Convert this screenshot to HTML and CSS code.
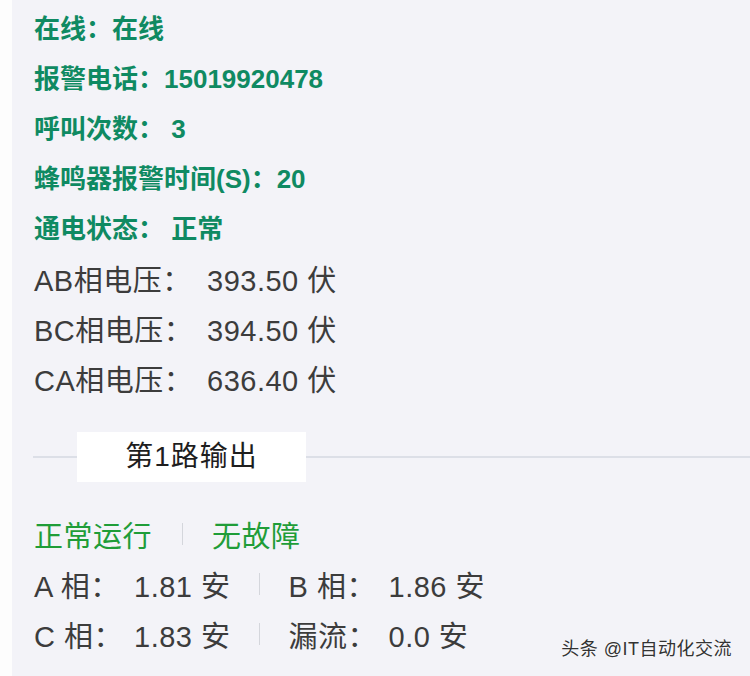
FILE: index.html
```html
<!DOCTYPE html>
<html lang="zh-CN">
<head>
  <meta charset="UTF-8" />
  <meta name="viewport" content="width=device-width, initial-scale=1.0" />
  <title>设备状态</title>
  <link rel="stylesheet" href="styles.css">
</head>
<body>
  <div class="page">
    <div class="info">
      <div class="row strong">在线：在线</div>
      <div class="row strong">报警电话：15019920478</div>
      <div class="row strong">呼叫次数： 3</div>
      <div class="row strong">蜂鸣器报警时间(S)：20</div>
      <div class="row strong">通电状态： 正常</div>
      <div class="row plain first"><span class="label">AB相电压：</span><span>393.50 伏</span></div>
      <div class="row plain"><span class="label">BC相电压：</span><span>394.50 伏</span></div>
      <div class="row plain"><span class="label">CA相电压：</span><span>636.40 伏</span></div>
    </div>

    <div class="divider">
      <span class="line short"></span>
      <span class="title">第1路输出</span>
      <span class="line"></span>
    </div>

    <div class="output">
      <div class="row plain status">
        <span>正常运行</span>
        <span class="sep"></span>
        <span>无故障</span>
      </div>
      <div class="row plain">
        <span class="cell"><span class="label small">A 相：</span><span>1.81 安</span></span>
        <span class="sep"></span>
        <span class="cell"><span class="label small">B 相：</span><span>1.86 安</span></span>
      </div>
      <div class="row plain">
        <span class="cell"><span class="label small">C 相：</span><span>1.83 安</span></span>
        <span class="sep"></span>
        <span class="cell"><span class="label small">漏流：</span><span>0.0 安</span></span>
      </div>
    </div>

    <div class="watermark">头条 @IT自动化交流</div>
  </div>
</body>
</html>
```

FILE: styles.css
```css
body {
  margin: 0;
  padding: 0;
  background-color: #fdfdfd;
  font-family: "Liberation Sans", "Noto Sans CJK SC", sans-serif;
}
.page {
  position: relative;
  margin-left: 12px;
  height: 676px;
  padding-top: 1px;
  box-sizing: border-box;
  background-color: #f3f3f8;
  overflow: hidden;
}
.info,
.output {
  padding-left: 22px;
}
.row {
  display: flex;
  align-items: center;
  height: 50px;
  white-space: pre;
}
.strong {
  font-size: 26px;
  font-weight: bold;
  color: #0f8a62;
}
.plain {
  font-size: 29px;
  letter-spacing: 0.5px;
  color: #3c3c3c;
}
.plain.first {
  margin-top: 2px;
}
.label {
  display: inline-block;
  width: 173px;
}
.label.small {
  width: 100px;
}
.divider {
  display: flex;
  align-items: center;
  margin: 29px 0 27px 21px;
  height: 50px;
}
.line {
  flex: 1;
  height: 2px;
  background-color: #dcdfe7;
}
.line.short {
  flex: none;
  width: 44px;
}
.title {
  width: 229px;
  height: 50px;
  line-height: 50px;
  text-align: center;
  background-color: #ffffff;
  font-size: 28px;
  letter-spacing: 1px;
  color: #1e1e1e;
}
.status {
  color: #1f9d38;
}
.cell {
  display: inline-flex;
}
.sep {
  display: inline-block;
  width: 1px;
  height: 22px;
  margin: 0 29px 0 28px;
  background-color: #d4d6dc;
}
.status .sep {
  margin: 0 29px 0 30px;
}
.watermark {
  position: absolute;
  right: 18px;
  top: 637px;
  font-size: 18px;
  line-height: 24px;
  letter-spacing: 0.5px;
  color: #333333;
  text-shadow: 0 0 2px #ffffff;
}
```
